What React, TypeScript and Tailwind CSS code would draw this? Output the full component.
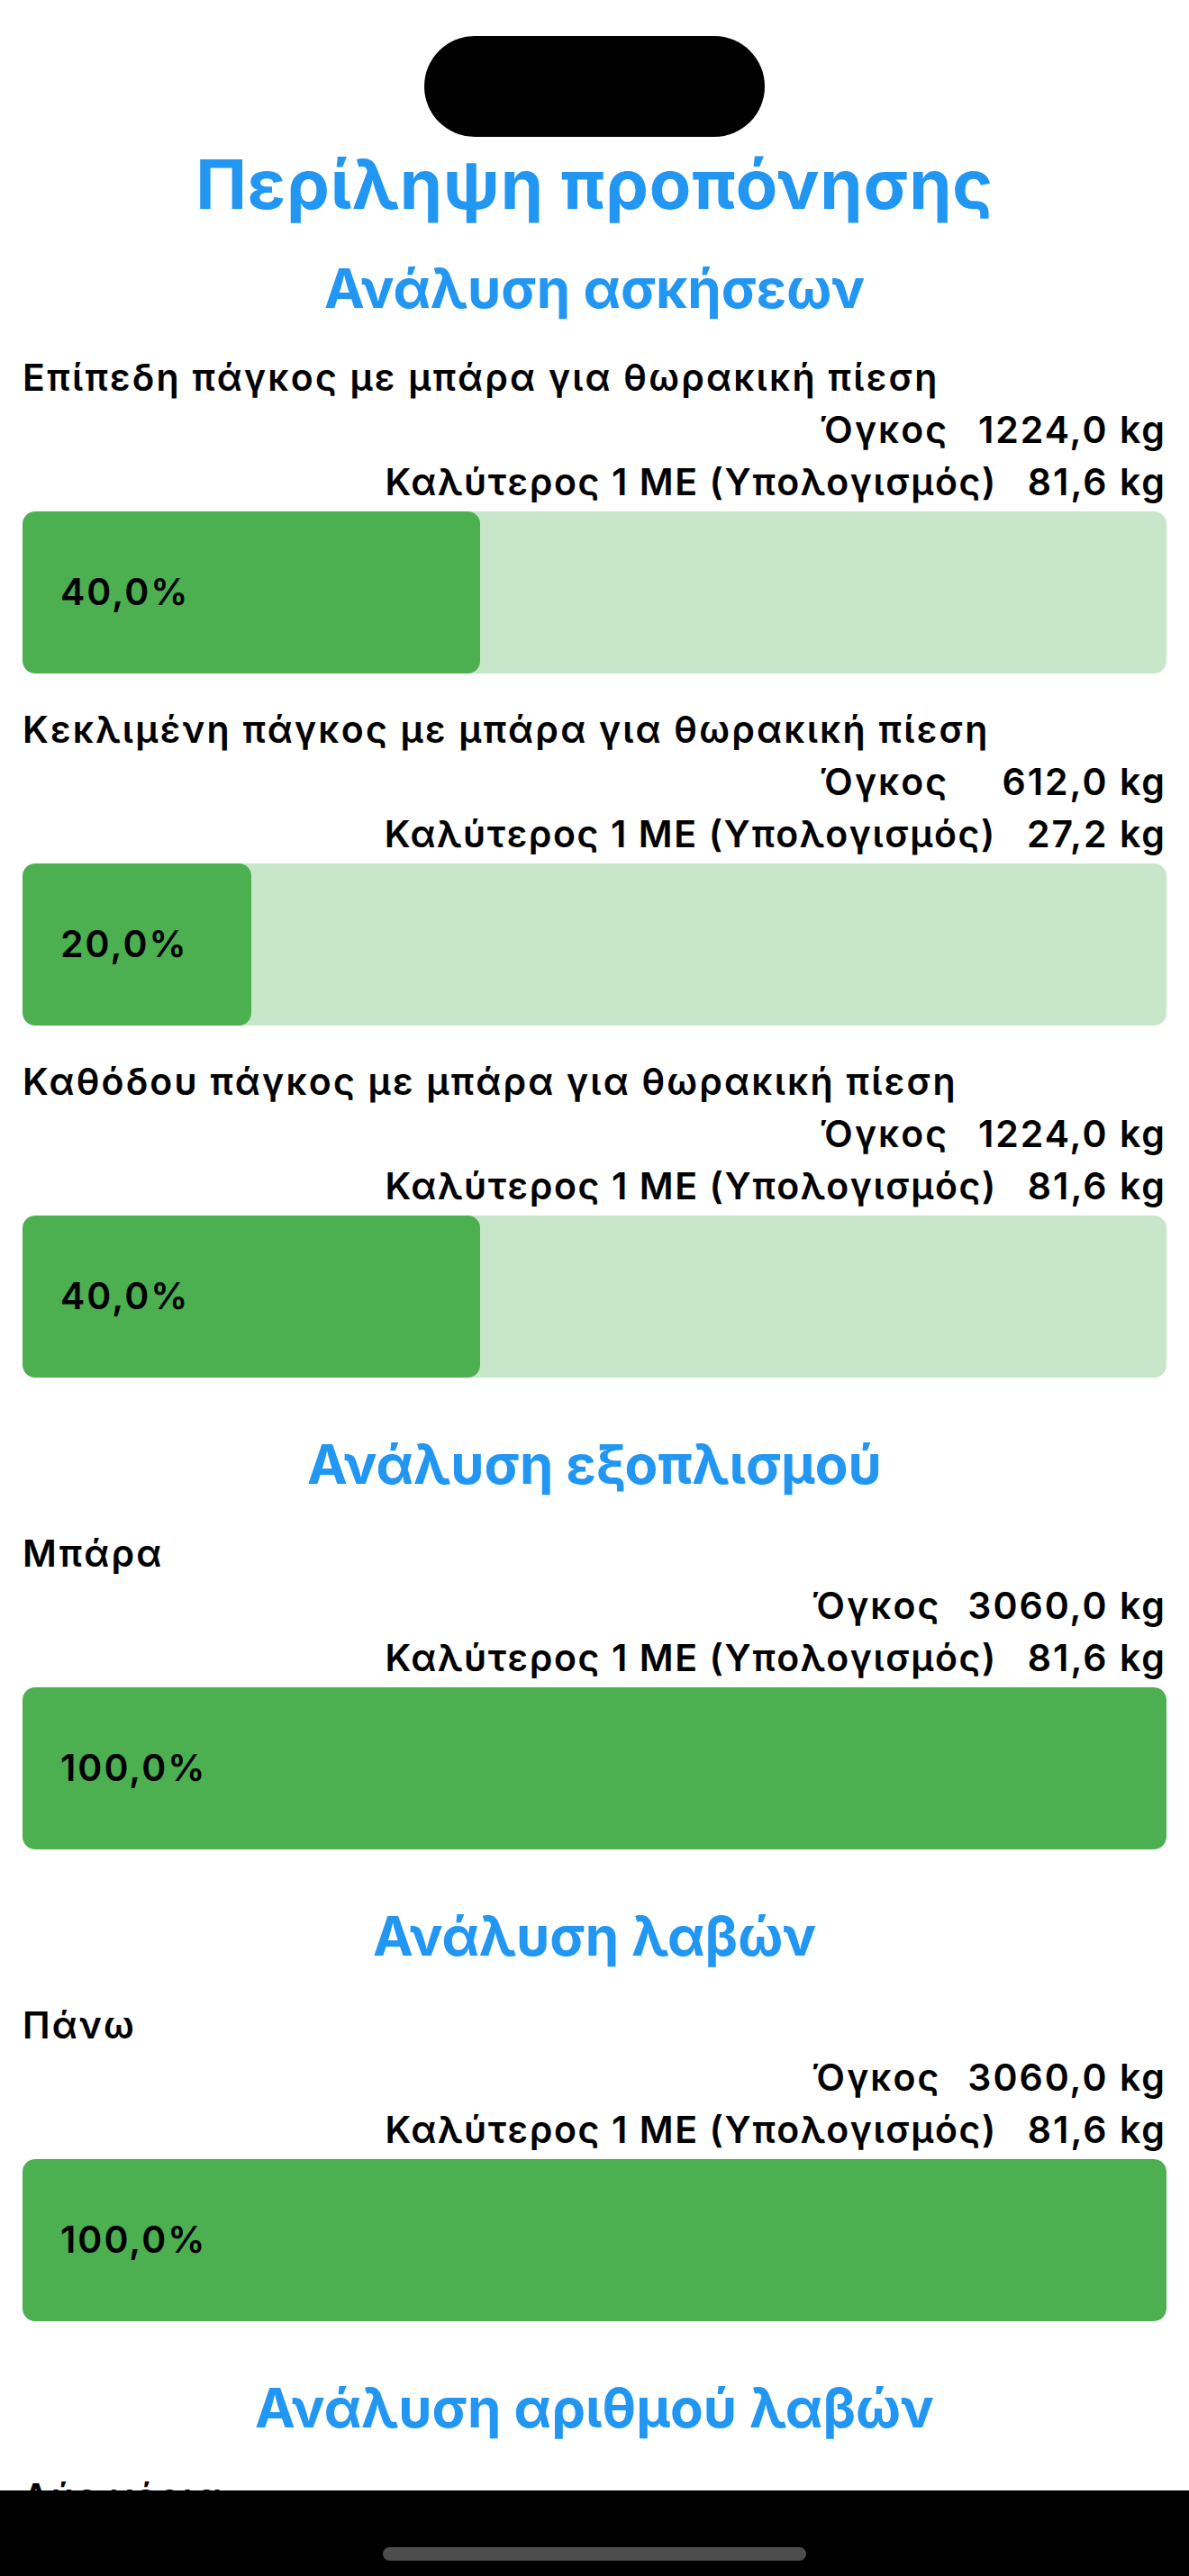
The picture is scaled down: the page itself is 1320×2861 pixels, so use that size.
const sections = [
  {
    title: "Ανάλυση ασκήσεων",
    items: [
      { name: "Επίπεδη πάγκος με μπάρα για θωρακική πίεση", volume: "1224,0 kg", best: "81,6 kg", pct: 40 },
      { name: "Κεκλιμένη πάγκος με μπάρα για θωρακική πίεση", volume: "612,0 kg", best: "27,2 kg", pct: 20 },
      { name: "Καθόδου πάγκος με μπάρα για θωρακική πίεση", volume: "1224,0 kg", best: "81,6 kg", pct: 40 },
    ],
  },
  {
    title: "Ανάλυση εξοπλισμού",
    items: [{ name: "Μπάρα", volume: "3060,0 kg", best: "81,6 kg", pct: 100 }],
  },
  {
    title: "Ανάλυση λαβών",
    items: [{ name: "Πάνω", volume: "3060,0 kg", best: "81,6 kg", pct: 100 }],
  },
  {
    title: "Ανάλυση αριθμού λαβών",
    items: [{ name: "Δύο χέρια", volume: "3060,0 kg", best: "81,6 kg", pct: 100 }],
  },
];

type Item = { name: string; volume: string; best: string; pct: number };

function StatBlock({ item }: { item: Item }) {
  return (
    <div className="flex flex-col">
      <div className="leading-[58px] text-[41px] font-semibold tracking-[2.2px] text-black whitespace-nowrap">
        {item.name}
      </div>
      <div className="flex justify-end gap-[30px] leading-[58px] text-[41px] font-semibold tracking-[2px] text-black whitespace-nowrap">
        <span>Όγκος</span>
        <span className="min-w-[212px] text-right">{item.volume}</span>
      </div>
      <div className="flex justify-end gap-[34px] leading-[58px] text-[41px] font-semibold tracking-[2px] text-black whitespace-nowrap">
        <span className="tracking-[1.6px]">Καλύτερος 1 ΜΕ (Υπολογισμός)</span>
        <span>{item.best}</span>
      </div>
      <div className="relative mt-[4px] h-[180px] rounded-[14px] bg-[#c8e6c9] overflow-hidden">
        <div
          className="absolute left-0 top-0 bottom-0 rounded-[14px] bg-[#4caf50]"
          style={{ width: `${item.pct}%` }}
        />
        <div className="relative flex h-full items-center pl-[42px] text-[41px] font-semibold tracking-[2px] text-black">
          {item.pct.toFixed(1).replace(".", ",")}%
        </div>
      </div>
    </div>
  );
}

export default function App() {
  return (
    <div
      className="relative h-[2861px] w-full overflow-hidden bg-white"
      style={{ fontFamily: "Inter, 'Noto Sans', sans-serif" }}
    >
      {/* dynamic island */}
      <div className="absolute left-[471px] top-[40px] h-[112px] w-[378px] rounded-full bg-black" />

      <div className="flex flex-col px-[25px] pt-[158px]">
        <h1 className="text-center text-[76px] font-bold leading-[92px] tracking-[0.8px] text-[#2196f3]">
          Περίληψη προπόνησης
        </h1>

        {sections.map((s, i) => (
          <section key={s.title} className={i === 0 ? "mt-[31px]" : "mt-[57px]"}>
            <h2 className="text-center text-[60px] font-bold leading-[78px] text-[#2196f3]">
              {s.title}
            </h2>
            <div className="mt-[31px] flex flex-col gap-[33px]">
              {s.items.map((it) => (
                <StatBlock key={it.name} item={it} />
              ))}
            </div>
          </section>
        ))}
      </div>

      {/* bottom home bar */}
      <div className="absolute bottom-0 left-0 right-0 flex h-[95px] items-start justify-center bg-black pt-[63px]">
        <div className="h-[15px] w-[470px] rounded-full bg-[#4d4d4d]" />
      </div>
    </div>
  );
}
